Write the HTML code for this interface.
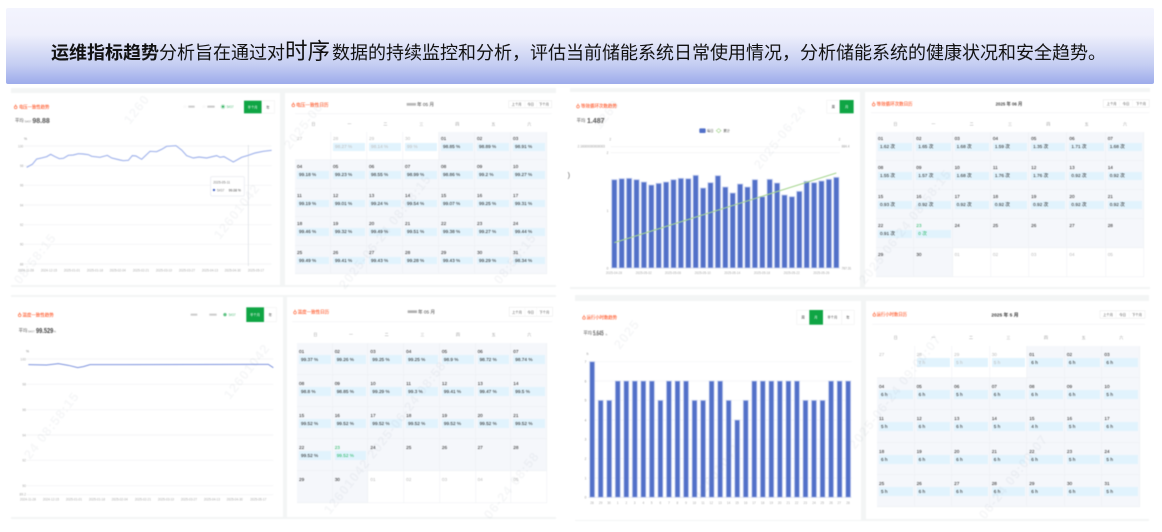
<!DOCTYPE html>
<html lang="zh-CN"><head><meta charset="utf-8"><title>运维指标趋势</title>
<style>
html,body{margin:0;padding:0;background:#fff}
body{width:1162px;height:532px;position:relative;overflow:hidden;font-family:"Liberation Sans","Noto Sans CJK SC",sans-serif}
.hd{position:absolute;left:6px;top:8px;width:1148px;height:76px;border-radius:2px;background:linear-gradient(#f3f4fe 0%,#eff0fc 35%,#c4cdf2 75%,#9dabeb 100%);box-sizing:border-box;padding-left:45px;white-space:nowrap;font-size:18px;line-height:85px;color:#111;font-family:"Noto Sans CJK SC","WenQuanYi Zen Hei",sans-serif}
.hd b{font-weight:700}.hd span{font-size:22.5px;margin-right:2px}
#w{position:absolute;inset:0;filter:blur(.4px)}
.g,.c,.cal{position:absolute}
.g{background:#f3f5f5}.c{background:#fff}
.cal{display:grid;grid-template-columns:repeat(7,1fr);grid-template-rows:repeat(5,1fr);font-size:4.7px;color:#111;line-height:1}
.cal div{position:relative;background:#f5f7fb;box-shadow:inset -.5px -.5px 0 #eceef2}
.cal .o{background:#fff;color:#bbb}
.cal i{position:absolute;left:2px;top:5px;font-style:normal}
.cal b{position:absolute;left:2px;right:2px;top:11px;height:7.5px;background:#e1f3fd;font-weight:400;line-height:7.5px;padding-left:2px;font-size:4.7px}
.cal .n,.cal .n b{color:#19b35a}
.cal.t i{top:7px}.cal.t b{top:12px;height:9px;line-height:9px}
svg{position:absolute;left:0;top:0}
text{font-family:"Liberation Sans","Noto Sans CJK SC",sans-serif}
text[fill="#ff6a3d"]{fill:#ff5a2c;stroke:#ff5a2c;stroke-width:.25}
</style></head><body>
<div class="hd"><b>运维指标趋势</b>分析旨在通过对<span>时序</span>数据的持续监控和分析，评估当前储能系统日常使用情况，分析储能系统的健康状况和安全趋势。</div>
<div id="w">
<div class="g" style="left:11px;top:88px;width:545px;height:199px"></div>
<div class="g" style="left:570px;top:88px;width:580px;height:201px"></div>
<div class="g" style="left:11px;top:295px;width:545px;height:224px"></div>
<div class="g" style="left:575px;top:295px;width:574px;height:226px"></div>
<div class="c" style="left:11px;top:93px;width:269px;height:192px"></div>
<div class="c" style="left:285px;top:93px;width:271px;height:192px"></div>
<div class="c" style="left:570px;top:92px;width:290px;height:195px"></div>
<div class="c" style="left:865px;top:92px;width:285px;height:195px"></div>
<div class="c" style="left:11px;top:297px;width:272px;height:220px"></div>
<div class="c" style="left:287px;top:297px;width:269px;height:220px"></div>
<div class="c" style="left:575px;top:301px;width:286px;height:219px"></div>
<div class="c" style="left:866px;top:301px;width:283px;height:218px"></div>

<div class="cal" style="left:295px;top:132px;width:252px;height:142px">
<div class="o"><i>27</i></div><div class="o"><i>28</i><b>98.27 %</b></div><div class="o"><i>29</i><b>98.14 %</b></div><div class="o"><i>30</i><b>99 %</b></div><div><i>01</i><b>98.85 %</b></div><div><i>02</i><b>98.89 %</b></div><div><i>03</i><b>98.91 %</b></div>
<div><i>04</i><b>99.18 %</b></div><div><i>05</i><b>99.23 %</b></div><div><i>06</i><b>98.55 %</b></div><div><i>07</i><b>98.99 %</b></div><div><i>08</i><b>98.86 %</b></div><div><i>09</i><b>99.2 %</b></div><div><i>10</i><b>99.27 %</b></div>
<div><i>11</i><b>99.19 %</b></div><div><i>12</i><b>99.01 %</b></div><div><i>13</i><b>99.24 %</b></div><div><i>14</i><b>99.54 %</b></div><div><i>15</i><b>99.07 %</b></div><div><i>16</i><b>99.25 %</b></div><div><i>17</i><b>99.31 %</b></div>
<div><i>18</i><b>99.46 %</b></div><div><i>19</i><b>99.32 %</b></div><div><i>20</i><b>99.49 %</b></div><div><i>21</i><b>99.51 %</b></div><div><i>22</i><b>99.38 %</b></div><div><i>23</i><b>99.27 %</b></div><div><i>24</i><b>99.44 %</b></div>
<div><i>25</i><b>99.49 %</b></div><div><i>26</i><b>99.41 %</b></div><div><i>27</i><b>99.43 %</b></div><div><i>28</i><b>99.28 %</b></div><div><i>29</i><b>99.43 %</b></div><div><i>30</i><b>99.29 %</b></div><div><i>31</i><b>98.34 %</b></div>
</div>

<div class="cal" style="left:876px;top:132px;width:268px;height:145px">
<div><i>01</i><b>1.62 次</b></div><div><i>02</i><b>1.65 次</b></div><div><i>03</i><b>1.68 次</b></div><div><i>04</i><b>1.59 次</b></div><div><i>05</i><b>1.35 次</b></div><div><i>06</i><b>1.71 次</b></div><div><i>07</i><b>1.68 次</b></div>
<div><i>08</i><b>1.55 次</b></div><div><i>09</i><b>1.57 次</b></div><div><i>10</i><b>1.68 次</b></div><div><i>11</i><b>1.76 次</b></div><div><i>12</i><b>1.76 次</b></div><div><i>13</i><b>0.92 次</b></div><div><i>14</i><b>0.92 次</b></div>
<div><i>15</i><b>0.93 次</b></div><div><i>16</i><b>0.92 次</b></div><div><i>17</i><b>0.92 次</b></div><div><i>18</i><b>0.92 次</b></div><div><i>19</i><b>0.92 次</b></div><div><i>20</i><b>0.92 次</b></div><div><i>21</i><b>0.92 次</b></div>
<div><i>22</i><b>0.91 次</b></div><div class="n"><i>23</i><b>0 次</b></div><div><i>24</i></div><div><i>25</i></div><div><i>26</i></div><div><i>27</i></div><div><i>28</i></div>
<div><i>29</i></div><div><i>30</i></div><div class="o"><i>01</i></div><div class="o"><i>02</i></div><div class="o"><i>03</i></div><div class="o"><i>04</i></div><div class="o"><i>05</i></div>
</div>

<div class="cal t" style="left:297px;top:343px;width:250px;height:160px">
<div><i>01</i><b>99.37 %</b></div><div><i>02</i><b>99.26 %</b></div><div><i>03</i><b>99.25 %</b></div><div><i>04</i><b>99.25 %</b></div><div><i>05</i><b>98.9 %</b></div><div><i>06</i><b>98.72 %</b></div><div><i>07</i><b>98.74 %</b></div>
<div><i>08</i><b>98.8 %</b></div><div><i>09</i><b>98.85 %</b></div><div><i>10</i><b>99.29 %</b></div><div><i>11</i><b>99.3 %</b></div><div><i>12</i><b>99.41 %</b></div><div><i>13</i><b>99.47 %</b></div><div><i>14</i><b>99.5 %</b></div>
<div><i>15</i><b>99.52 %</b></div><div><i>16</i><b>99.52 %</b></div><div><i>17</i><b>99.52 %</b></div><div><i>18</i><b>99.52 %</b></div><div><i>19</i><b>99.52 %</b></div><div><i>20</i><b>99.52 %</b></div><div><i>21</i><b>99.52 %</b></div>
<div><i>22</i><b>99.52 %</b></div><div class="n"><i>23</i><b>99.52 %</b></div><div><i>24</i></div><div><i>25</i></div><div><i>26</i></div><div><i>27</i></div><div><i>28</i></div>
<div><i>29</i></div><div><i>30</i></div><div class="o"><i>01</i></div><div class="o"><i>02</i></div><div class="o"><i>03</i></div><div class="o"><i>04</i></div><div class="o"><i>05</i></div>
</div>

<div class="cal t" style="left:877px;top:346px;width:263px;height:161px">
<div class="o"><i>27</i></div><div class="o"><i>28</i><b>7 h</b></div><div class="o"><i>29</i><b>5 h</b></div><div class="o"><i>30</i><b>5 h</b></div><div><i>01</i><b>6 h</b></div><div><i>02</i><b>6 h</b></div><div><i>03</i><b>6 h</b></div>
<div><i>04</i><b>6 h</b></div><div><i>05</i><b>6 h</b></div><div><i>06</i><b>5 h</b></div><div><i>07</i><b>6 h</b></div><div><i>08</i><b>6 h</b></div><div><i>09</i><b>6 h</b></div><div><i>10</i><b>5 h</b></div>
<div><i>11</i><b>5 h</b></div><div><i>12</i><b>6 h</b></div><div><i>13</i><b>6 h</b></div><div><i>14</i><b>5 h</b></div><div><i>15</i><b>4 h</b></div><div><i>16</i><b>5 h</b></div><div><i>17</i><b>6 h</b></div>
<div><i>18</i><b>6 h</b></div><div><i>19</i><b>6 h</b></div><div><i>20</i><b>6 h</b></div><div><i>21</i><b>6 h</b></div><div><i>22</i><b>6 h</b></div><div><i>23</i><b>5 h</b></div><div><i>24</i><b>5 h</b></div>
<div><i>25</i><b>5 h</b></div><div><i>26</i><b>6 h</b></div><div><i>27</i><b>6 h</b></div><div><i>28</i><b>6 h</b></div><div><i>29</i><b>6 h</b></div><div><i>30</i><b>6 h</b></div><div><i>31</i><b>5 h</b></div>
</div>

<svg width="1162" height="532" viewBox="0 0 1162 532">
<!-- chart 1 -->
<g transform="translate(0,90) scale(.3333)">
<g stroke="#f1f2f4" stroke-width="2"><path d="M72 168H815M72 227H815M72 286H815M72 345H815M72 404H815M72 463H815M72 522H815"/></g>
<path d="M745 165V528" stroke="#d9dce3" stroke-width="2"/>
<path d="M80 232L97 223L110 207L125 204L140 200L152 193L165 200L178 206L190 205L205 196L220 195L235 191L250 192L265 194L275 199L300 202L322 196L335 204L360 210L370 212L385 211L397 197L408 198L425 208L450 184L470 185L485 178L500 169L528 167L545 180L560 197L580 204L597 201L620 204L650 197L660 202L672 200L700 216L725 202L745 196L765 189L790 184L815 181" fill="none" stroke="#a3b5ec" stroke-width="3.5"/>
<g fill="#aaa" font-size="9.5" text-anchor="end"><text x="70" y="172">100</text><text x="70" y="231">98</text><text x="70" y="290">96</text><text x="70" y="349">94</text><text x="70" y="408">92</text><text x="70" y="467">90</text><text x="70" y="526">88</text></g>
<text x="72" y="150" font-size="10" fill="#888">%</text>
<g fill="#aaa" font-size="9.5" text-anchor="middle"><text x="78" y="544">2024-11-28</text><text x="147" y="544">2024-12-15</text><text x="216" y="544">2025-01-01</text><text x="285" y="544">2025-01-18</text><text x="353" y="544">2025-02-04</text><text x="423" y="544">2025-02-21</text><text x="492" y="544">2025-03-10</text><text x="561" y="544">2025-03-27</text><text x="630" y="544">2025-04-13</text><text x="698" y="544">2025-04-30</text><text x="768" y="544">2025-05-17</text></g>
<rect x="632" y="260" width="101" height="58" rx="4" fill="#fff" stroke="#eef0f4" stroke-width="3"/>
<text x="640" y="281" font-size="10" fill="#777">2025-05-11</text><circle cx="642" cy="300" r="3.5" fill="#3f5fc4"/><text x="651" y="304" font-size="10" fill="#888">5#37</text><text x="686" y="304" font-size="10" fill="#444">99.08 %</text>
<text x="57" y="55" font-size="13" fill="#ff6a3d">电压一致性趋势</text><circle cx="47" cy="52" r="4" fill="none" stroke="#ff6a3d" stroke-width="2"/><path d="M47 43V48" stroke="#ff6a3d" stroke-width="2"/>
<text x="45" y="96" font-size="13" fill="#555">平均</text><text x="74" y="98" font-size="9" fill="#888">5#37</text><text x="97" y="99" font-size="21" fill="#555" font-weight="700">98.88</text><text x="140" y="98" font-size="9" fill="#888">%</text>
<circle cx="555" cy="50" r="5" fill="#fafafa"/><rect x="565" y="47" width="19" height="6" fill="#ccc"/><circle cx="612" cy="50" r="5" fill="#fafafa"/><rect x="622" y="47" width="22" height="6" fill="#c8c8c8"/><circle cx="669" cy="50" r="7" fill="#bfe8cd"/><circle cx="669" cy="50" r="3" fill="#1aa94f"/><text x="680" y="54" font-size="9.5" fill="#5cc081">5#37</text>
<rect x="732" y="32" width="53" height="38" fill="#0fa544"/><text x="758" y="55" font-size="10" fill="#fff" text-anchor="middle">半个月</text><rect x="785.500" y="32.500" width="38" height="37" fill="#fff" stroke="#e6e6e6"/><text x="804" y="55" font-size="10" fill="#444" text-anchor="middle">年</text>
</g>
<!-- cal 1 head -->
<g transform="translate(285,90) scale(.3333)">
<text x="33" y="49" font-size="14" fill="#ff6a3d">电压一致性日历</text><circle cx="25" cy="46" r="4" fill="none" stroke="#ff6a3d" stroke-width="2"/><path d="M25 37V42" stroke="#ff6a3d" stroke-width="2"/>
<path d="M30 71H800" stroke="#f1f2f4" stroke-width="2"/>
<rect x="365" y="39" width="28" height="8" fill="#b8b8b8"/><text x="396" y="48" font-size="14" fill="#444">年 05 月</text>
<rect x="671" y="32" width="129" height="21" fill="#fff" stroke="#ddd"/><path d="M720 32V53M755 32V53" stroke="#eee"/><g font-size="10" fill="#555" text-anchor="middle"><text x="695" y="47">上个月</text><text x="737" y="47">今日</text><text x="777" y="47">下个月</text></g>
<g font-size="12" fill="#999" text-anchor="middle"><text x="85" y="107">日</text><text x="193" y="107">一</text><text x="301" y="107">二</text><text x="409" y="107">三</text><text x="517" y="107">四</text><text x="625" y="107">五</text><text x="733" y="107">六</text></g>
</g>
<!-- chart 3 -->
<g transform="translate(565,90) scale(.3333)">
<path d="M137 170H825M137 188H825" stroke="#f0f1f3" stroke-width="2"/><path d="M137 534H825" stroke="#dfe1e6" stroke-width="2"/>
<g fill="#5270c8" stroke="#c6d0f0" stroke-width="2.500">
<rect x="140" y="269" width="16" height="265"/><rect x="162.200" y="266" width="16" height="268"/><rect x="184.400" y="265" width="16" height="269"/><rect x="206.600" y="269" width="16" height="265"/><rect x="228.800" y="276" width="16" height="258"/><rect x="251" y="285" width="16" height="249"/><rect x="273.200" y="280" width="16" height="254"/><rect x="295.400" y="276" width="16" height="258"/><rect x="317.600" y="269" width="16" height="265"/><rect x="339.800" y="265" width="16" height="269"/><rect x="362" y="266" width="16" height="268"/><rect x="384.200" y="256" width="16" height="278"/><rect x="406.400" y="294" width="16" height="240"/><rect x="428.600" y="278" width="16" height="256"/><rect x="450.800" y="257" width="16" height="277"/><rect x="473" y="291" width="16" height="243"/><rect x="495.200" y="309" width="16" height="225"/><rect x="517.400" y="282" width="16" height="252"/><rect x="539.600" y="291" width="16" height="243"/><rect x="561.800" y="269" width="16" height="265"/><rect x="584" y="320" width="16" height="214"/><rect x="606.200" y="268" width="16" height="266"/><rect x="628.400" y="279" width="16" height="255"/><rect x="650.600" y="315" width="16" height="219"/><rect x="672.800" y="320" width="16" height="214"/><rect x="695" y="304" width="16" height="230"/><rect x="717.200" y="274" width="16" height="260"/><rect x="739.400" y="278" width="16" height="256"/><rect x="761.600" y="273" width="16" height="261"/><rect x="783.800" y="268" width="16" height="266"/><rect x="806" y="262" width="16" height="272"/>
</g>
<path d="M148 458L814 249" stroke="#a6d68f" stroke-width="3" fill="none"/>
<g fill="#999" font-size="9.500"><text x="133" y="152">2</text><text x="821" y="152">2</text><text x="38" y="173">2.16000000000003</text><text x="830" y="173">884.4</text><text x="125" y="192">2</text><text x="125" y="366">1</text><text x="125" y="538">0</text><text x="830" y="539">767.31</text></g>
<g fill="#aaa" font-size="9.500" text-anchor="middle"><text x="147" y="552">2025-04-28</text><text x="236" y="552">2025-05-02</text><text x="324" y="552">2025-05-06</text><text x="413" y="552">2025-05-10</text><text x="502" y="552">2025-05-14</text><text x="591" y="552">2025-05-18</text><text x="680" y="552">2025-05-22</text><text x="769" y="552">2025-05-26</text></g>
<rect x="403" y="115" width="19" height="14" rx="3" fill="#5270c8"/><text x="426" y="126" font-size="10" fill="#555">每日</text><path d="M461 116L468 122L461 128L454 122Z" fill="#fff" stroke="#a6d68f" stroke-width="2"/><text x="475" y="126" font-size="10" fill="#555">累计</text>
<text x="48" y="53" font-size="13.500" fill="#ff6a3d">等效循环次数趋势</text><circle cx="39" cy="50" r="4" fill="none" stroke="#ff6a3d" stroke-width="2"/><path d="M39 41V46" stroke="#ff6a3d" stroke-width="2"/>
<text x="35" y="96" font-size="13" fill="#555">平均</text><text x="66" y="99" font-size="21" fill="#555" font-weight="700">1.487</text><text x="106" y="99" font-size="10" fill="#888">次</text>
<rect x="785.500" y="30.500" width="39" height="39" fill="#fff" stroke="#e6e6e6"/><text x="805" y="54" font-size="10" fill="#444" text-anchor="middle">周</text><rect x="824" y="30" width="42" height="40" fill="#0fa544"/><text x="845" y="54" font-size="10" fill="#fff" text-anchor="middle">月</text>
<text x="8" y="263" font-size="22" fill="#666">)</text>
</g>
<!-- cal 2 head -->
<g transform="translate(860,90) scale(.3333)">
<text x="50" y="47" font-size="13.500" fill="#ff6a3d">等效循环次数日历</text><circle cx="41" cy="44" r="4" fill="none" stroke="#ff6a3d" stroke-width="2"/><path d="M41 35V40" stroke="#ff6a3d" stroke-width="2"/>
<path d="M33 68H868" stroke="#f1f2f4" stroke-width="2"/>
<text x="407" y="47" font-size="13" fill="#444" font-weight="700">2025 年 06 月</text>
<rect x="730" y="29" width="138" height="23" fill="#fff" stroke="#ddd"/><path d="M779 29V52M818 29V52" stroke="#eee"/><g font-size="10" fill="#555" text-anchor="middle"><text x="755" y="45">上个月</text><text x="798" y="45">今日</text><text x="843" y="45">下个月</text></g>
<g font-size="12" fill="#999" text-anchor="middle"><text x="106" y="107">日</text><text x="220" y="107">一</text><text x="335" y="107">二</text><text x="450" y="107">三</text><text x="565" y="107">四</text><text x="680" y="107">五</text><text x="795" y="107">六</text></g>
</g>
<!-- chart 2 -->
<g transform="translate(0,290) scale(.3333)">
<g stroke="#f1f2f4" stroke-width="2"><path d="M80 207H820M80 283H820M80 359H820M80 435H820M80 511H820M80 587H820M80 614H820"/></g>
<path d="M85 224L140 225L175 221L205 226L233 233L250 230L270 224L805 223L820 233" fill="none" stroke="#7d93de" stroke-width="3"/>
<g fill="#aaa" font-size="10" text-anchor="end"><text x="78" y="211">100</text><text x="78" y="287">98</text><text x="78" y="363">96</text><text x="78" y="439">94</text><text x="78" y="515">92</text><text x="78" y="591">90</text><text x="78" y="616">89.2</text></g>
<text x="78" y="187" font-size="10" fill="#888">%</text>
<g fill="#aaa" font-size="9.500" text-anchor="middle"><text x="84" y="632">2024-11-28</text><text x="153" y="632">2024-12-15</text><text x="222" y="632">2025-01-01</text><text x="291" y="632">2025-01-18</text><text x="359" y="632">2025-02-04</text><text x="429" y="632">2025-02-21</text><text x="498" y="632">2025-03-10</text><text x="567" y="632">2025-03-27</text><text x="636" y="632">2025-04-13</text><text x="704" y="632">2025-04-30</text><text x="775" y="632">2025-05-17</text></g>
<text x="67" y="79" font-size="13.500" fill="#ff6a3d">温度一致性趋势</text><circle cx="59" cy="76" r="4" fill="none" stroke="#ff6a3d" stroke-width="2"/><path d="M59 67V72" stroke="#ff6a3d" stroke-width="2"/>
<text x="56" y="126" font-size="13" fill="#555">平均</text><text x="84" y="128" font-size="9" fill="#888">5#37</text><text x="108" y="129" font-size="21" fill="#444" font-weight="700" textLength="52" lengthAdjust="spacingAndGlyphs">99.529</text><text x="160" y="128" font-size="9" fill="#888">%</text>
<rect x="572" y="71" width="20" height="6" fill="#ccc"/><rect x="628" y="71" width="22" height="6" fill="#ccc"/><circle cx="675" cy="74" r="5" fill="#1aa94f" opacity=".7"/><text x="686" y="78" font-size="9.500" fill="#5cc081">5#37</text>
<rect x="739" y="52" width="53" height="44" fill="#0fa544"/><text x="765" y="78" font-size="10" fill="#fff" text-anchor="middle">半个月</text><rect x="792.500" y="52.500" width="37" height="43" fill="#fff" stroke="#e6e6e6"/><text x="811" y="78" font-size="10" fill="#444" text-anchor="middle">年</text>
</g>
<!-- cal 3 head -->
<g transform="translate(285,290) scale(.3333)">
<text x="38" y="71" font-size="13.500" fill="#ff6a3d">温度一致性日历</text><circle cx="30" cy="68" r="4" fill="none" stroke="#ff6a3d" stroke-width="2"/><path d="M30 59V64" stroke="#ff6a3d" stroke-width="2"/>
<path d="M22 95H802" stroke="#f1f2f4" stroke-width="2"/>
<rect x="368" y="61" width="28" height="8" fill="#b0b0b0"/><text x="399" y="71" font-size="14" fill="#444">年 05 月</text>
<rect x="673" y="52" width="130" height="27" fill="#fff" stroke="#ddd"/><path d="M720 52V79M755 52V79" stroke="#eee"/><g font-size="10" fill="#555" text-anchor="middle"><text x="696" y="70">上个月</text><text x="737" y="70">今日</text><text x="778" y="70">下个月</text></g>
<g font-size="12" fill="#999" text-anchor="middle"><text x="91" y="138">日</text><text x="198" y="138">一</text><text x="305" y="138">二</text><text x="412" y="138">三</text><text x="519" y="138">四</text><text x="626" y="138">五</text><text x="733" y="138">六</text></g>
</g>
<!-- chart 4 -->
<g transform="translate(570,290) scale(.3333)">
<path d="M55 215H845M55 273H845M55 331H845M55 390H845M55 448H845M55 506H845M55 564H845" stroke="#f4f5f6" stroke-width="2"/><path d="M55 622H845" stroke="#dfe1e6" stroke-width="2"/>
<g fill="#5270c8" stroke="#c6d0f0" stroke-width="2.500">
<rect x="59" y="215" width="15" height="407"/><rect x="84.600" y="331" width="15" height="291"/><rect x="110.200" y="331" width="15" height="291"/><rect x="135.800" y="273" width="15" height="349"/><rect x="161.400" y="273" width="15" height="349"/><rect x="187" y="273" width="15" height="349"/><rect x="212.600" y="273" width="15" height="349"/><rect x="238.200" y="273" width="15" height="349"/><rect x="263.800" y="331" width="15" height="291"/><rect x="289.400" y="273" width="15" height="349"/><rect x="315" y="273" width="15" height="349"/><rect x="340.600" y="273" width="15" height="349"/><rect x="366.200" y="331" width="15" height="291"/><rect x="391.800" y="331" width="15" height="291"/><rect x="417.400" y="273" width="15" height="349"/><rect x="443" y="273" width="15" height="349"/><rect x="468.600" y="331" width="15" height="291"/><rect x="494.200" y="390" width="15" height="232"/><rect x="519.800" y="331" width="15" height="291"/><rect x="545.400" y="273" width="15" height="349"/><rect x="571" y="273" width="15" height="349"/><rect x="596.600" y="273" width="15" height="349"/><rect x="622.200" y="273" width="15" height="349"/><rect x="647.800" y="273" width="15" height="349"/><rect x="673.400" y="273" width="15" height="349"/><rect x="699" y="331" width="15" height="291"/><rect x="724.600" y="331" width="15" height="291"/><rect x="750.200" y="331" width="15" height="291"/><rect x="775.800" y="273" width="15" height="349"/><rect x="801.400" y="273" width="15" height="349"/><rect x="827" y="273" width="15" height="349"/>
</g>
<g fill="#999" font-size="9.500" text-anchor="end"><text x="49" y="219">7</text><text x="49" y="277">6</text><text x="49" y="335">5</text><text x="49" y="394">4</text><text x="49" y="452">3</text><text x="49" y="510">2</text><text x="49" y="568">1</text><text x="49" y="626">0</text></g>
<text x="50" y="195" font-size="9.500" fill="#888">h</text>
<g fill="#aaa" font-size="9.500" text-anchor="middle"><text x="66" y="642">28</text><text x="92" y="642">29</text><text x="117" y="642">30</text><text x="143" y="642">1</text><text x="169" y="642">2</text><text x="194" y="642">3</text><text x="220" y="642">4</text><text x="245" y="642">5</text><text x="271" y="642">6</text><text x="297" y="642">7</text><text x="322" y="642">8</text><text x="348" y="642">9</text><text x="373" y="642">10</text><text x="399" y="642">11</text><text x="424" y="642">12</text><text x="450" y="642">13</text><text x="476" y="642">14</text><text x="501" y="642">15</text><text x="527" y="642">16</text><text x="552" y="642">17</text><text x="578" y="642">18</text><text x="604" y="642">19</text><text x="629" y="642">20</text><text x="655" y="642">21</text><text x="680" y="642">22</text><text x="706" y="642">23</text><text x="732" y="642">24</text><text x="757" y="642">25</text><text x="783" y="642">26</text><text x="808" y="642">27</text><text x="834" y="642">28</text></g>
<text x="50" y="87" font-size="13" fill="#ff6a3d">运行小时数趋势</text><circle cx="42" cy="84" r="4" fill="none" stroke="#ff6a3d" stroke-width="2"/><path d="M42 75V80" stroke="#ff6a3d" stroke-width="2"/>
<text x="40" y="134" font-size="13" fill="#555">平均</text><text x="69" y="137" font-size="21" fill="#666" font-weight="700" textLength="32" lengthAdjust="spacingAndGlyphs">5.645</text><text x="107" y="137" font-size="9" fill="#888">h</text>
<rect x="680.500" y="60.500" width="172" height="43" fill="#fff" stroke="#e6e6e6"/><path d="M815 60V104" stroke="#e6e6e6"/><rect x="718" y="60" width="41" height="44" fill="#0fa544"/><g font-size="10" text-anchor="middle" fill="#444"><text x="699" y="86">周</text><text x="738" y="86" fill="#fff">月</text><text x="787" y="86">半个月</text><text x="834" y="86">年</text></g>
</g>
<!-- cal 4 head -->
<g transform="translate(860,290) scale(.3333)">
<text x="50" y="78" font-size="13" fill="#ff6a3d">运行小时数日历</text><circle cx="43" cy="75" r="4" fill="none" stroke="#ff6a3d" stroke-width="2"/><path d="M43 66V71" stroke="#ff6a3d" stroke-width="2"/>
<path d="M37 103H855" stroke="#f1f2f4" stroke-width="2"/>
<text x="435" y="79" font-size="14.500" fill="#333" font-weight="700" text-anchor="middle">2025 年 5 月</text>
<rect x="720" y="62" width="135" height="23" fill="#fff" stroke="#ddd"/><path d="M768 62V85M808 62V85" stroke="#eee"/><g font-size="10" fill="#555" text-anchor="middle"><text x="744" y="78">上个月</text><text x="788" y="78">今日</text><text x="831" y="78">下个月</text></g>
<g font-size="12" fill="#999" text-anchor="middle"><text x="107" y="147">日</text><text x="220" y="147">一</text><text x="333" y="147">二</text><text x="445" y="147">三</text><text x="558" y="147">四</text><text x="671" y="147">五</text><text x="784" y="147">六</text></g>
</g>
<!-- watermarks -->
<g font-size="13" font-weight="700" fill="#8a8fa0" opacity=".075" letter-spacing="1">
<text transform="translate(20,285) rotate(-52)">08:58:15</text>
<text transform="translate(220,240) rotate(-52)">12601042</text>
<text transform="translate(130,125) rotate(-52)">1260</text>
<text transform="translate(290,150) rotate(-52)">2025-06-</text>
<text transform="translate(345,290) rotate(-52)">2025-06-24  08:58:15</text>
<text transform="translate(500,285) rotate(-52)">08:58:15</text>
<text transform="translate(600,130) rotate(-52)">1260</text>
<text transform="translate(760,170) rotate(-52)">2025-06-24</text>
<text transform="translate(865,285) rotate(-52)">2025-06-24 08:58:15</text>
<text transform="translate(30,460) rotate(-52)">24 08:58:15</text>
<text transform="translate(230,400) rotate(-52)">12601042</text>
<text transform="translate(330,515) rotate(-52)">12601042 2025-06-24 08:58:</text>
<text transform="translate(490,520) rotate(-52)">06-24 08:58</text>
<text transform="translate(620,350) rotate(-52)">2025</text>
<text transform="translate(700,500) rotate(-52)">12601042</text>
<text transform="translate(855,450) rotate(-52)">2025-06-24 09:00:07</text>
<text transform="translate(985,520) rotate(-52)">06-24 09:00:07</text>
</g>
</svg>
</div>
</body></html>
